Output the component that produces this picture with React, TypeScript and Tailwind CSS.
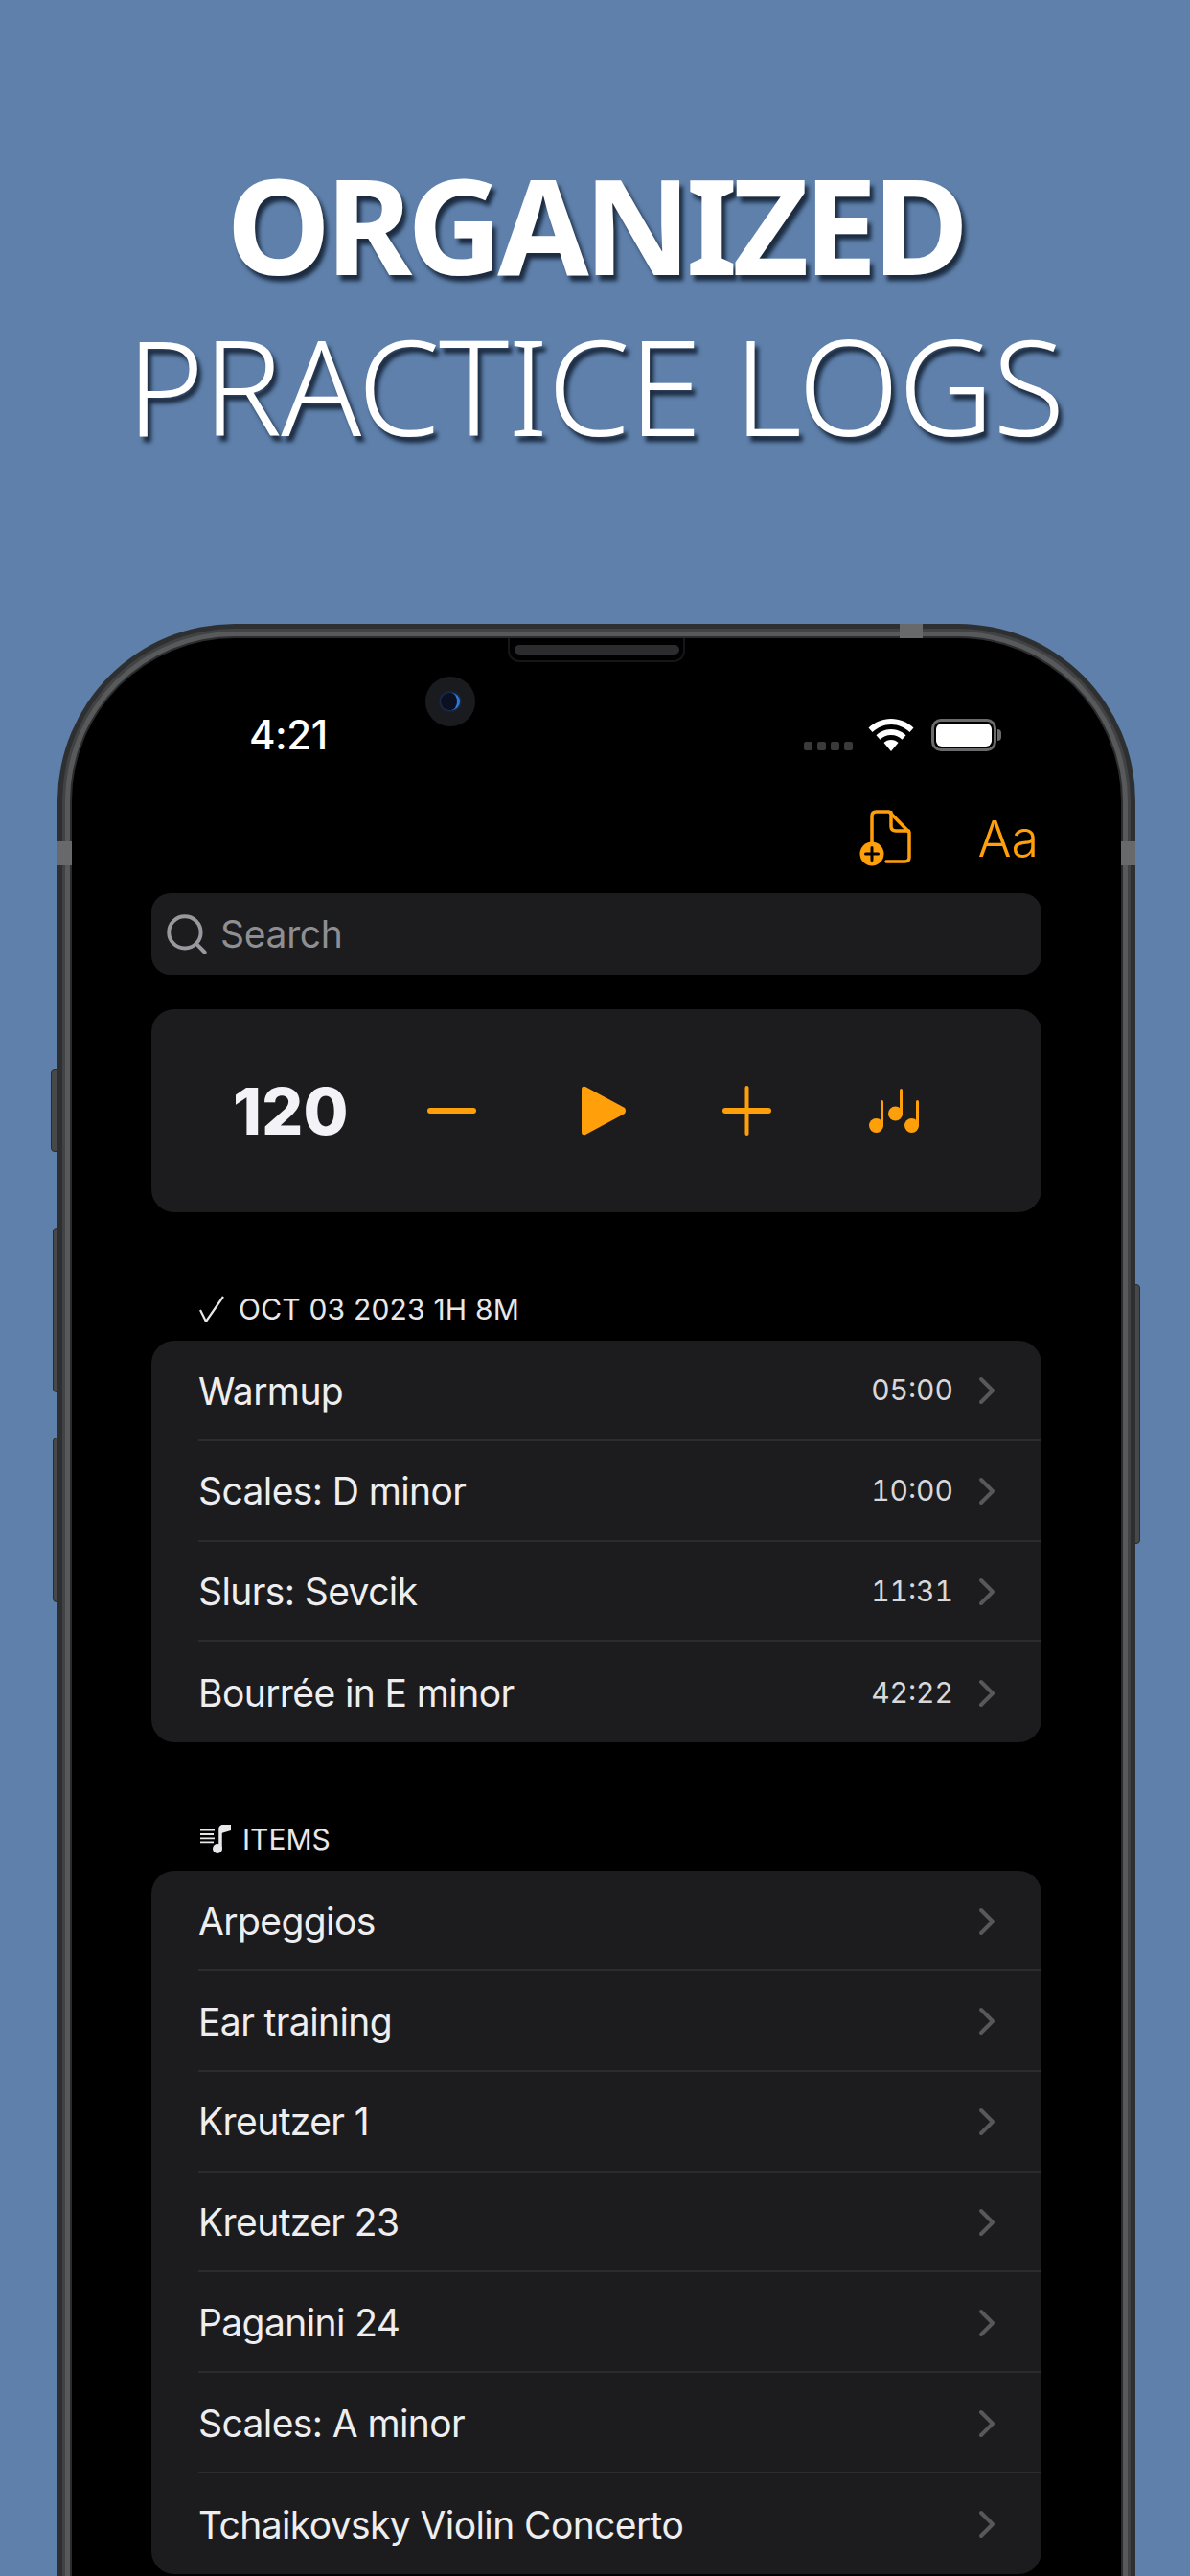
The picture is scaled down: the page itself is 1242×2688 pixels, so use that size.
import React from 'react';
import { Search } from 'lucide-react';

const ORANGE = '#ff9f0a';

const logRows = [
  { name: 'Warmup', time: '05:00' },
  { name: 'Scales: D minor', time: '10:00' },
  { name: 'Slurs: Sevcik', time: '11:31' },
  { name: 'Bourrée in E minor', time: '42:22' },
];

const itemRows = [
  'Arpeggios',
  'Ear training',
  'Kreutzer 1',
  'Kreutzer 23',
  'Paganini 24',
  'Scales: A minor',
  'Tchaikovsky Violin Concerto',
];

const Row = ({ name, time, last }: { name: string; time?: string; last?: boolean }) => (
  <div className="pl-[49px]">
    <div className={`h-[104.8px] flex items-center pr-[48px] ${last ? '' : 'border-b-2 border-[#2c2c2e]'}`}>
      <span className="flex-1 pt-[3px] text-[39px] text-[#eeeef0] tracking-[-0.6px]">{name}</span>
      {time && <span className="pt-[1px] text-[30px] text-[#d8d8da] mr-[26px] tabular-nums">{time}</span>}
      <svg className="mt-[2px]" width="18" height="30" viewBox="0 0 18 30" fill="none" stroke="#58585c" strokeWidth="4" strokeLinecap="round" strokeLinejoin="round">
        <path d="M3 3L15 15L3 27" />
      </svg>
    </div>
  </div>
);

const Wifi = () => (
  <svg width="48" height="34" viewBox="0 0 48 34" fill="white">
    <path d="M24 0C15 0 7 3.500 0.500 9.500L4.500 14C10 9 16.500 6 24 6C31.500 6 38 9 43.500 14L47.500 9.500C41 3.500 33 0 24 0Z" />
    <path d="M24 11C18 11 12.800 13.300 8.500 17.300L12.500 21.800C15.500 19 19.500 17 24 17C28.500 17 32.500 19 35.500 21.800L39.500 17.300C35.200 13.300 30 11 24 11Z" />
    <path d="M24 22C21 22 18.500 23 16.500 25L24 34L31.500 25C29.500 23 27 22 24 22Z" />
  </svg>
);

const Battery = () => (
  <div className="flex items-center">
    <div className="w-[68px] h-[34px] rounded-[10px] border-[3px] border-[#6b6b6d] p-[2px]">
      <div className="w-full h-full rounded-[6px] bg-white" />
    </div>
    <div className="w-[4px] h-[12px] rounded-r-full bg-[#6b6b6d] ml-[1px]" />
  </div>
);

const NewDocIcon = () => (
  <svg width="56" height="60" viewBox="0 0 56 60" fill="none" stroke={ORANGE} strokeWidth="3.500" strokeLinejoin="round" strokeLinecap="round">
    <path d="M13 34V6.500C13 3.500 14.500 2 17.500 2H31L52 23.500V49.500C52 52.500 50.500 54 47.500 54H28" />
    <path d="M33 2.500V17C33 20.500 34.500 22 38 22H51.500" />
    <circle cx="13" cy="46" r="12.500" fill={ORANGE} stroke="none" />
    <path d="M13 39.500V52.500M6.500 46H19.500" stroke="#000" strokeWidth="3" />
  </svg>
);

const NotesIcon = () => (
  <svg width="52" height="46" viewBox="0 0 52 46" fill={ORANGE}>
    <ellipse cx="7.500" cy="38.500" rx="7.500" ry="7.500" />
    <rect x="12" y="12" width="3" height="28" rx="1.500" />
    <ellipse cx="27.500" cy="26" rx="7.500" ry="7.500" />
    <rect x="32" y="0" width="3" height="28" rx="1.500" />
    <ellipse cx="44.500" cy="38.500" rx="7.500" ry="7.500" />
    <rect x="49" y="12" width="3" height="28" rx="1.500" />
  </svg>
);

const ScoreIcon = () => (
  <svg width="32" height="30" viewBox="0 0 32 30" fill="none" stroke="#e8e8ea">
    <path d="M0 5.700H15M0 10H14M0 14.300H15M0 18.300H14" strokeWidth="1.800" />
    <path d="M21 25V4C21 1.500 25 0.500 32 0.500" strokeWidth="3.500" />
    <path d="M22 1H32V6L22 9Z" fill="#e8e8ea" stroke="none" />
    <ellipse cx="18" cy="25" rx="5" ry="5" fill="#e8e8ea" stroke="none" />
  </svg>
);

const SideButton = ({ className }: { className: string }) => (
  <div className={`absolute bg-[#47484a] border border-[#2a2b2d] ${className}`} />
);

const App = () => {
  return (
    <div className="w-[1242px] h-[2688px] overflow-hidden bg-[#5e80ab] text-white [font-family:'Noto_Sans',sans-serif]">
      <header className="h-[651px] flex flex-col items-center pt-[149px] text-[138px] leading-[168px] [text-shadow:4px_6px_4px_#1c2b40]">
        <h1 className="font-bold tracking-[-5.5px]">ORGANIZED</h1>
        <h2 className="font-[350] tracking-[-1.3px]">PRACTICE LOGS</h2>
      </header>

      <div className="relative ml-[60px] w-[1125px] h-[2100px] pt-[15px] px-[15px]">
        <SideButton className="left-[-7px] top-[465px] w-[8px] h-[86px] rounded-l-[4px]" />
        <SideButton className="left-[-5px] top-[630px] w-[6px] h-[172px] rounded-l-[4px]" />
        <SideButton className="left-[-5px] top-[849px] w-[6px] h-[172px] rounded-l-[4px]" />
        <SideButton className="right-[-5px] top-[689px] w-[6px] h-[271px] rounded-r-[4px]" />

        {/* bezel is drawn as rings round the screen: thin dark, metal, mid, dark rim */}
        <div className="relative h-full rounded-t-[170px] bg-black font-[Inter,sans-serif] shadow-[0_0_0_2px_#2b2c2e,0_0_0_7px_#58595b,0_0_0_10px_#414244,0_0_0_15px_#2e2f31]">
          {/* antenna bands */}
          <div className="absolute left-[864px] top-[-15px] w-[24px] h-[15px] bg-[#68696b]" />
          <div className="absolute left-[-15px] top-[212px] w-[15px] h-[25px] bg-[#68696b]" />
          <div className="absolute right-[-15px] top-[212px] w-[15px] h-[25px] bg-[#68696b]" />

          {/* speaker and camera */}
          <div className="absolute left-[455px] top-0 w-[185px] h-[25px] rounded-b-[12px] border-2 border-t-0 border-[#161618] flex items-center justify-center">
            <div className="w-[172px] h-[10px] rounded-full bg-[#2c2c2e]" />
          </div>
          <div className="absolute left-[369px] top-[40px] w-[52px] h-[52px] rounded-full bg-[#1a1b1e] flex items-center justify-center">
            <div className="w-[20px] h-[18px] rounded-full bg-[#0a1020] border-r-[3px] border-[#2f78d8] shadow-[0_0_3px_#1d4fb0]" />
          </div>

          {/* status bar */}
          <div className="flex items-center h-[174px] pl-[185px] pr-[125px] pt-[27px]">
            <span className="flex-1 text-[42px] font-medium tracking-[-0.5px]">4:21</span>
            <div className="flex gap-[5px] mr-[16px] mt-[24px]">
              <div className="w-[9px] h-[9px] rounded-[2px] bg-[#3a3a3c]" />
              <div className="w-[9px] h-[9px] rounded-[2px] bg-[#3a3a3c]" />
              <div className="w-[9px] h-[9px] rounded-[2px] bg-[#3a3a3c]" />
              <div className="w-[9px] h-[9px] rounded-[2px] bg-[#3a3a3c]" />
            </div>
            <Wifi />
            <div className="ml-[18px]"><Battery /></div>
          </div>

          {/* nav buttons */}
          <div className="flex items-center justify-end h-[64px] pr-[86px] mt-[3px]">
            <NewDocIcon />
            <span className="ml-[67px] pt-[2px] text-[52px] font-light text-[#ff9f0a]">Aa</span>
          </div>

          <div className="px-[83px] mt-[25px]">
            {/* search */}
            <div className="h-[85px] rounded-[20px] bg-[#1c1c1e] flex items-center pl-[12px] gap-[10px]">
              <Search size={50} strokeWidth={1.9} color="#98989e" />
              <span className="pt-[2px] text-[39px] text-[#8e8e93] tracking-[-0.3px]">Search</span>
            </div>

            {/* metronome */}
            <div className="mt-[36px] h-[212px] rounded-[24px] bg-[#1c1c1e] flex items-center">
              <span className="ml-[85px] w-[120px] text-[68px] leading-none font-extrabold text-[#f2f2f7]">120</span>
              <div className="ml-[83px] w-[51px] h-[6px] rounded-full bg-[#ff9f0a]" />
              <svg className="ml-[110px]" width="47" height="52" viewBox="0 0 47 52" fill={ORANGE}>
                <path d="M0 4Q0 0 4 1L45 23Q47 26 45 29L4 51Q0 52 0 48Z" />
              </svg>
              <svg className="ml-[100px]" width="51" height="52" viewBox="0 0 51 52" fill={ORANGE}>
                <rect x="0" y="23" width="51" height="6" rx="3" />
                <rect x="23.500" y="0" width="4" height="52" rx="2" />
              </svg>
              <div className="ml-[102px]"><NotesIcon /></div>
            </div>

            {/* practice log */}
            <div className="mt-[73px] mb-[5px] h-[56px] flex items-center pl-[50px] gap-[15px] text-[30px] text-[#e8e8ea] tracking-[0.2px]">
              <svg width="26" height="28" viewBox="0 0 26 28" fill="none" stroke="#e8e8ea" strokeWidth="2.200">
                <path d="M1 15L7 27L25 1" />
              </svg>
              <span>OCT 03 2023 1H 8M</span>
            </div>
            <div className="rounded-[24px] bg-[#1c1c1e]">
              {logRows.map((r, i) => (
                <Row key={r.name} name={r.name} time={r.time} last={i === logRows.length - 1} />
              ))}
            </div>

            {/* items */}
            <div className="mt-[73px] mb-[5px] h-[56px] flex items-center pl-[51px] gap-[12px] text-[30px] text-[#e8e8ea]">
              <ScoreIcon />
              <span>ITEMS</span>
            </div>
            <div className="rounded-[24px] bg-[#1c1c1e]">
              {itemRows.map((name, i) => (
                <Row key={name} name={name} last={i === itemRows.length - 1} />
              ))}
            </div>
          </div>
        </div>
      </div>
    </div>
  );
};

export default App;
